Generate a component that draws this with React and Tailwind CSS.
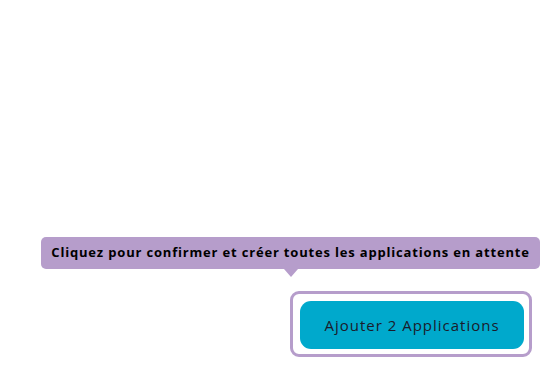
import React from 'react';

function App() {
  return (
    <div className="w-[548px] h-[372px] bg-white relative">
      <div className="flex justify-end pt-[291px] pr-[16px]">
        <div className="relative">
          {/* tooltip sits over the page above the button */}
          <div className="absolute left-[-249px] top-[-54px] w-[499px] h-[32px] rounded-[5px] bg-[#b69dcb] flex items-center justify-center">
            <span className="font-['Open_Sans',sans-serif] font-bold text-[13px] tracking-[0.82px] text-black whitespace-nowrap">
              Cliquez pour confirmer et créer toutes les applications en attente
            </span>
            <div className="absolute left-[243px] bottom-[-8px] w-0 h-0 border-l-[7px] border-r-[7px] border-t-[8px] border-l-transparent border-r-transparent border-t-[#b69dcb]" />
          </div>
          <div className="w-[242px] h-[66px] border-[3px] border-[#b69dcb] rounded-[9px] p-[7px]">
            <button className="w-[224px] h-[48px] rounded-[11px] bg-[#00a9cc] text-[#1b1b2b] text-[15px] tracking-[1px] font-['Open_Sans',sans-serif]">
              Ajouter 2 Applications
            </button>
          </div>
        </div>
      </div>
    </div>
  );
}

export default App;
